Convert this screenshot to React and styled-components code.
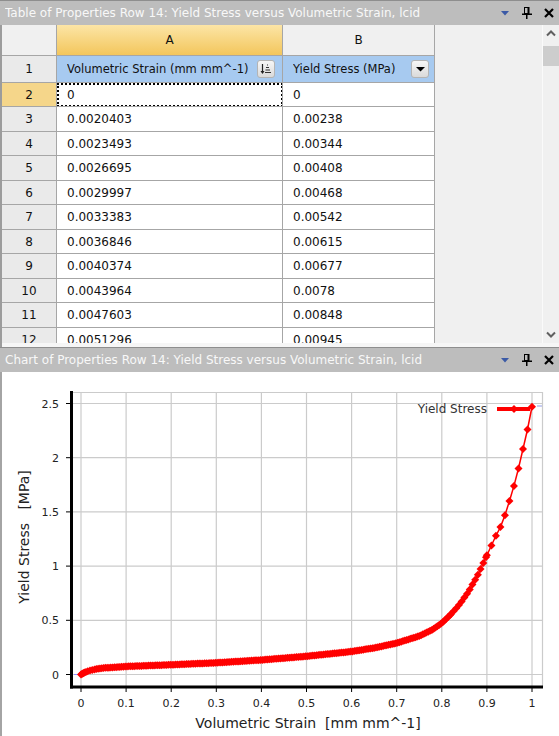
import React from 'react';
import styled, { createGlobalStyle } from 'styled-components';

const GlobalStyle = createGlobalStyle`
  html, body {
    margin: 0;
    padding: 0;
    background: #f0f0f0;
  }
  body {
    font-family: "DejaVu Sans", Verdana, sans-serif;
  }
`;

const Page = styled.div`
  width: 559px;
  height: 736px;
  display: flex;
  flex-direction: column;
  overflow: hidden;
`;

const Panel = styled.section`
  flex: none;
  height: ${(p) => p.$h}px;
  display: flex;
  flex-direction: column;
`;

const TitleBar = styled.header`
  flex: none;
  height: ${(p) => p.$h}px;
  box-sizing: border-box;
  border-top: 1px solid #8e8e8e;
  background: #bdbdbd;
  color: #f8f8f8;
  font-size: 12px;
  display: flex;
  align-items: center;
  padding: 0 3px 0 5px;
`;

const TitleText = styled.span`
  flex: 1;
  white-space: nowrap;
  overflow: hidden;
`;

const TitleButtons = styled.div`
  display: flex;
  align-items: center;
  gap: 8px;
`;

const TitleIcon = styled.span`
  width: 14px;
  height: 14px;
  display: flex;
  align-items: center;
  justify-content: center;
`;

const TableBody = styled.div`
  flex: 1;
  display: flex;
  border-left: 2px solid #9c9c9c;
  background: #f0f0f0;
  overflow: hidden;
`;

const Grid = styled.div`
  flex: 1;
  display: flex;
  flex-direction: column;
  overflow: hidden;
`;

const Row = styled.div`
  flex: none;
  height: ${(p) => p.$h}px;
  display: grid;
  grid-template-columns: 55px 226px 152px;
`;

const cellBg = {
  corner: '#f0f0f0',
  col: '#f0f0f0',
  colSel: 'linear-gradient(to bottom, #fce5a6, #f3c65c)',
  num: '#eaeaea',
  numSel: '#f5d68a',
  label: '#a7caf0',
  data: '#ffffff',
};

const Cell = styled.div`
  position: relative;
  box-sizing: border-box;
  border-right: 1px solid #a6a6a6;
  border-bottom: 1px solid #a6a6a6;
  background: ${(p) => cellBg[p.$kind]};
  color: #111;
  font-size: ${(p) => (p.$kind === 'label' ? 11.5 : 12)}px;
  display: flex;
  align-items: center;
  justify-content: ${(p) => (p.$center ? 'center' : 'flex-start')};
  padding: ${(p) => (p.$center ? '0' : '0 0 0 10px')};
  white-space: nowrap;
  overflow: hidden;
`;

const LabelText = styled.span`
  flex: 1;
  overflow: hidden;
`;

const Focus = styled.div`
  position: absolute;
  inset: 0 -1px -1px 0;
  border: 2px dotted #000;
  pointer-events: none;
`;

const HeadButton = styled.span`
  flex: none;
  width: 18px;
  height: 18px;
  box-sizing: border-box;
  margin-right: ${(p) => p.$mr}px;
  border: 1px solid #b4b4b4;
  border-radius: 3px;
  background: linear-gradient(to bottom, #f6f6f6, #dadada);
  display: flex;
  align-items: center;
  justify-content: center;
`;

const Scroll = styled.div`
  flex: none;
  width: 16px;
  border-left: 1px solid #fafafa;
  display: flex;
  flex-direction: column;
  background: #f0f0f0;
`;

const ScrollArrow = styled.div`
  flex: none;
  height: 17px;
  display: flex;
  align-items: center;
  justify-content: center;
`;

const Thumb = styled.div`
  flex: none;
  height: 20px;
  margin-top: 4px;
  background: #cdcdcd;
`;

const ScrollSpace = styled.div`
  flex: 1;
`;

const BottomStrip = styled.div`
  flex: none;
  height: 4px;
  background: #f6f6f6;
  border-left: 2px solid #9c9c9c;
`;

const ChartBody = styled.div`
  flex: 1;
  background: #fff;
  border-left: 2px solid #a4a4a4;
  overflow: hidden;
`;

const DockArrow = () => (
  <svg width="8" height="5" viewBox="0 0 8 5">
    <path d="M0 0 H8 L4 4.5 Z" fill="#3b5aa6" />
  </svg>
);

const PinIcon = () => (
  <svg width="10" height="12" viewBox="0 0 10 12">
    <rect x="2.5" y="0.5" width="4" height="6" fill="none" stroke="#000" strokeWidth="1" />
    <rect x="5.5" y="0" width="2" height="7" fill="#000" />
    <rect x="0" y="6.5" width="10" height="1.5" fill="#000" />
    <rect x="4" y="8" width="1.5" height="4" fill="#000" />
  </svg>
);

const CloseIcon = () => (
  <svg width="10" height="10" viewBox="0 0 10 10">
    <path d="M1 1 L9 9 M9 1 L1 9" stroke="#000" strokeWidth="2.2" />
  </svg>
);

const SortIcon = () => (
  <svg width="12" height="12" viewBox="0 0 12 12">
    <path d="M2.5 1 V10" stroke="#222" strokeWidth="1.2" />
    <path d="M0.5 8 L2.5 11 L4.5 8 Z" fill="#222" />
    <path d="M7 2 H8 M6 4.5 H9 M5.5 7 H10 M5 9.5 H11" stroke="#333" strokeWidth="1.1" />
  </svg>
);

const DropIcon = () => (
  <svg width="9" height="5" viewBox="0 0 9 5">
    <path d="M0 0 H9 L4.5 4.5 Z" fill="#000" />
  </svg>
);

const Chevron = ({ down }) => (
  <svg width="10" height="7" viewBox="0 0 10 7">
    <polyline
      points={down ? '1,1.5 5,5.5 9,1.5' : '1,5.5 5,1.5 9,5.5'}
      fill="none"
      stroke="#606060"
      strokeWidth="2"
    />
  </svg>
);

const rows = [
  [2, '0', '0'],
  [3, '0.0020403', '0.00238'],
  [4, '0.0023493', '0.00344'],
  [5, '0.0026695', '0.00408'],
  [6, '0.0029997', '0.00468'],
  [7, '0.0033383', '0.00542'],
  [8, '0.0036846', '0.00615'],
  [9, '0.0040374', '0.00677'],
  [10, '0.0043964', '0.0078'],
  [11, '0.0047603', '0.00848'],
  [12, '0.0051296', '0.00945'],
];

const rowHeights = [24, 25, 24, 25, 24, 25, 24, 25, 24, 25, 25];

const Title = ({ text }) => (
  <TitleBar $h={25}>
    <TitleText>{text}</TitleText>
    <TitleButtons>
      <TitleIcon><DockArrow /></TitleIcon>
      <TitleIcon><PinIcon /></TitleIcon>
      <TitleIcon><CloseIcon /></TitleIcon>
    </TitleButtons>
  </TitleBar>
);

// chart geometry, page coordinates
const X0 = 81;
const XS = 451;
const Y0 = 675.5;
const YS = 108.4;
const px = (e) => X0 + e * XS;
const py = (v) => Y0 - v * YS;

const curve = [
  [0, 0], [0.005, 0.012], [0.01, 0.022], [0.02, 0.036], [0.03, 0.047],
  [0.05, 0.06], [0.1, 0.074], [0.2, 0.09], [0.3, 0.108], [0.4, 0.134],
  [0.5, 0.168], [0.6, 0.212], [0.65, 0.245], [0.7, 0.29], [0.75, 0.355],
  [0.78, 0.415], [0.8, 0.475], [0.82, 0.555], [0.84, 0.65], [0.86, 0.77],
  [0.88, 0.92], [0.9, 1.1], [0.92, 1.28], [0.93, 1.36], [0.94, 1.47],
  [0.95, 1.6], [0.96, 1.74], [0.97, 1.9], [0.98, 2.08], [0.99, 2.26], [1, 2.47],
];

const interp = (e) => {
  for (let i = 1; i < curve.length; i++) {
    const [e1, v1] = curve[i];
    const [e0, v0] = curve[i - 1];
    if (e <= e1) return v0 + ((e - e0) / (e1 - e0)) * (v1 - v0);
  }
  return curve[curve.length - 1][1];
};

// dense along the flat part, one step per 0.01 where the curve climbs
const samples = [0, 0.002, 0.004, 0.006, 0.008, 0.011, 0.015, 0.02, 0.025];
for (let e = 0.03; e < 0.82; e += 0.004) samples.push(e);
for (let e = 0.82; e < 0.9; e += 0.006) samples.push(e);
for (let k = 90; k <= 100; k++) samples.push(k / 100);
const points = samples.map((e) => [px(e), py(interp(e))]);

const Diamond = ({ x, y }) => (
  <path d={`M${x} ${y - 4} L${x + 4} ${y} L${x} ${y + 4} L${x - 4} ${y} Z`} fill="#ff0000" />
);

const Chart = () => {
  const xTicks = [0, 0.1, 0.2, 0.3, 0.4, 0.5, 0.6, 0.7, 0.8, 0.9, 1];
  const yTicks = [0, 0.5, 1, 1.5, 2, 2.5];
  return (
    <svg width="557" height="363" viewBox="2 373 557 363" style={{ display: 'block' }}>
      <g stroke="#cbcbcb" strokeWidth="1.2">
        {xTicks.map((t) => (
          <line key={t} x1={px(t)} x2={px(t)} y1={393} y2={688} />
        ))}
        <line x1={542.5} x2={542.5} y1={393} y2={688} />
        {yTicks.map((t) => (
          <line key={t} x1={72} x2={543} y1={py(t)} y2={py(t)} />
        ))}
        <line x1={72} x2={543} y1={393.5} y2={393.5} />
      </g>
      <g stroke="#000" strokeWidth="1">
        {yTicks.map((t) => (
          <line key={t} x1={66} x2={71} y1={py(t)} y2={py(t)} />
        ))}
        {xTicks.map((t) => (
          <line key={t} x1={px(t)} x2={px(t)} y1={689} y2={693} />
        ))}
      </g>
      <line x1={71.5} x2={71.5} y1={392} y2={689.5} stroke="#000" strokeWidth="3" />
      <line x1={70} x2={543} y1={688} y2={688} stroke="#000" strokeWidth="3" />
      <g fontFamily="DejaVu Sans, sans-serif" fontSize="11" fill="#222">
        {yTicks.map((t) => (
          <text key={t} x={59} y={py(t) + 4} textAnchor="end">{t}</text>
        ))}
        {xTicks.map((t) => (
          <text key={t} x={px(t)} y={708} textAnchor="middle">{t}</text>
        ))}
      </g>
      <text
        x={308}
        y={729}
        textAnchor="middle"
        fontFamily="DejaVu Sans, sans-serif"
        fontSize="14"
        fill="#222"
        style={{ whiteSpace: 'pre' }}
      >
        {'Volumetric Strain  [mm mm^-1]'}
      </text>
      <text
        x={0}
        y={0}
        transform="translate(29 538) rotate(-90)"
        textAnchor="middle"
        fontFamily="DejaVu Sans, sans-serif"
        fontSize="14"
        fill="#222"
        style={{ whiteSpace: 'pre' }}
      >
        {'Yield Stress   [MPa]'}
      </text>
      <line x1={74} x2={81} y1={675.5} y2={675.5} stroke="#8c8cff" strokeWidth="1" />
      <polyline
        points={points.map((p) => p.join(',')).join(' ')}
        fill="none"
        stroke="#ff0000"
        strokeWidth="1.5"
      />
      {points.map(([x, y], i) => (
        <Diamond key={i} x={x} y={y} />
      ))}
      <text
        x={487}
        y={414}
        textAnchor="end"
        fontFamily="DejaVu Sans, sans-serif"
        fontSize="12"
        fill="#333"
      >
        Yield Stress
      </text>
      <line x1={497} x2={530} y1={410} y2={410} stroke="#ff0000" strokeWidth="4" />
      <Diamond x={514} y={410} />
      <rect x={537} y={406} width={5} height={2} fill="#c8cdf2" />
    </svg>
  );
};

export default function App() {
  return (
    <Page>
      <GlobalStyle />
      <Panel $h={347}>
        <Title text="Table of Properties Row 14: Yield Stress versus Volumetric Strain, lcid" />
        <TableBody>
          <Grid>
            <Row $h={31}>
              <Cell $kind="corner" />
              <Cell $kind="colSel" $center>A</Cell>
              <Cell $kind="col" $center>B</Cell>
            </Row>
            <Row $h={27}>
              <Cell $kind="num" $center>1</Cell>
              <Cell $kind="label">
                <LabelText>Volumetric Strain (mm mm^-1)</LabelText>
                <HeadButton $mr={7}><SortIcon /></HeadButton>
              </Cell>
              <Cell $kind="label">
                <LabelText>Yield Stress (MPa)</LabelText>
                <HeadButton $mr={5}><DropIcon /></HeadButton>
              </Cell>
            </Row>
            {rows.map(([n, a, b], i) => (
              <Row key={n} $h={rowHeights[i]}>
                <Cell $kind={n === 2 ? 'numSel' : 'num'} $center>{n}</Cell>
                <Cell $kind="data">
                  {a}
                  {n === 2 && <Focus />}
                </Cell>
                <Cell $kind="data">{b}</Cell>
              </Row>
            ))}
          </Grid>
          <Scroll>
            <ScrollArrow><Chevron /></ScrollArrow>
            <Thumb />
            <ScrollSpace />
            <ScrollArrow><Chevron down /></ScrollArrow>
          </Scroll>
        </TableBody>
        <BottomStrip />
      </Panel>
      <Panel $h={389}>
        <Title text="Chart of Properties Row 14: Yield Stress versus Volumetric Strain, lcid" />
        <ChartBody>
          <Chart />
        </ChartBody>
      </Panel>
    </Page>
  );
}
